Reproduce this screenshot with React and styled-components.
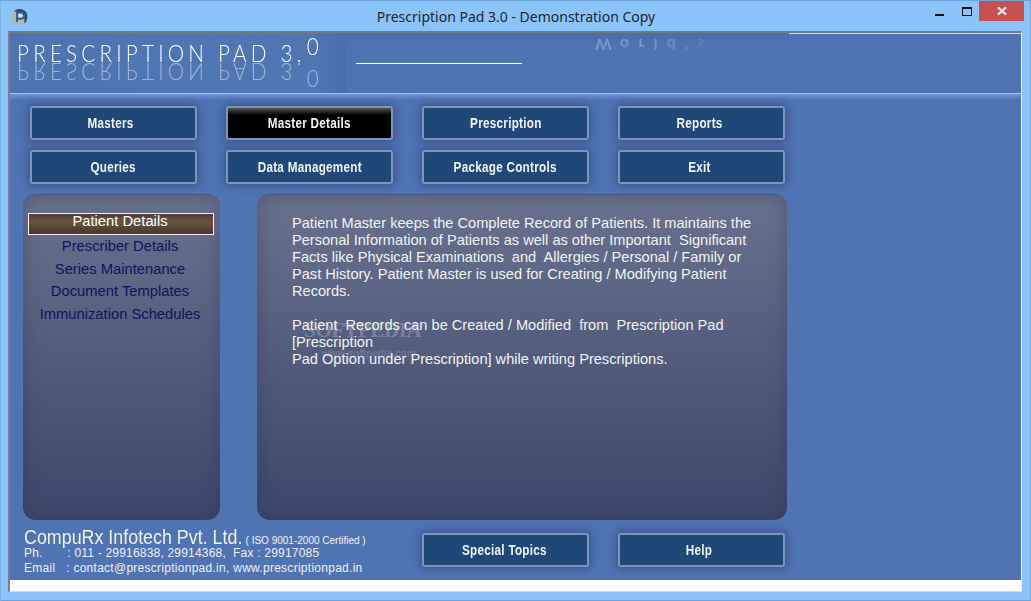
import React from "react";
import styled, { createGlobalStyle } from "styled-components";

const Global = createGlobalStyle`
  html, body { margin: 0; padding: 0; background: #8ac4fa; }
  #root { width: 1031px; height: 601px; overflow: hidden; }
`;

const Win = styled.div`
  width: 1031px; height: 601px; box-sizing: border-box; display: flex; flex-direction: column;
  background: #8ac4fa; border: 1px solid #6fa3d6; border-left-color: #7fb4e8; border-right-color: #6fa3d6;
`;
const TitleBar = styled.div`
  height: 30px; flex: none; position: relative; display: flex; align-items: center; justify-content: center;
`;
const AppIcon = styled.svg`
  position: absolute; left: 10px; top: 7px; width: 17px; height: 17px;
`;
const TitleText = styled.div`
  font: 14px "Noto Sans", "Open Sans", sans-serif; color: #23262b; padding-left: 1px;
`;
const Controls = styled.div`
  position: absolute; right: 6px; top: 0; display: flex; align-items: flex-start;
`;
const Min = styled.div`
  width: 9px; height: 2px; background: #111; margin-top: 13px; margin-right: 18px;
`;
const Max = styled.div`
  width: 8px; height: 6px; border: 1px solid #111; border-top-width: 2px; margin-top: 6px; margin-right: 7px;
`;
const Close = styled.div`
  width: 45px; height: 20px; background: #c75050; display: flex; align-items: center; justify-content: center;
`;
const Client = styled.div`
  margin: 0 8px 8px 7px; flex: 1; box-sizing: border-box; display: flex; flex-direction: column;
  border-top: 2px solid #76787f; border-left: 2px solid #7c7f86; border-right: 1px solid #f0f0f0; border-bottom: 1px solid #d8d8d8; background: #fff;
  min-height: 0;
`;
const Body = styled.div`
  height: 547px; flex: none; background: #5073b3; display: flex; flex-direction: column; position: relative;
`;
const Header = styled.div`
  height: 60px; flex: none; position: relative; display: flex; overflow: hidden;
  background: #5073b3;
  border-bottom: 1px solid #a7c2ea;
`;
const HeaderImage = styled.div`
  width: 779px; flex: none; height: 60px; display: flex; position: relative; background: linear-gradient(180deg, #4a6dab 0, #4f74b2 12px);
`;
const HeaderRest = styled.div`
  flex: 1; border-top: 1px solid #c8d4ea; box-sizing: border-box; height: 60px;
`;
const Brand = styled.div`
  position: relative; width: 330px; height: 60px; flex: none; margin-left: 7px; background: linear-gradient(90deg, #4f74b2 0, #5176b4 90%, #4a6dab 100%);
`;
const BrandLine = styled.div`
  position: absolute; left: 0; top: 8px; white-space: pre; color: #fff; transform-origin: left center;
  transform: scaleX(.86);
  font: 300 24px/24px Lato, sans-serif; letter-spacing: 4.9px;
`;
const Sup = styled.span`
  position: absolute; left: 337px; top: -7px; font-size: 24px; letter-spacing: 0;
`;
const BrandMirror = styled(BrandLine)`
  top: 27px; transform: scale(.86, -1); opacity: .45;
`;
const NameRule = styled.div`
  width: 166px; height: 1px; background: #fff; margin: 30px 0 0 9px; flex: none;
`;
const Worlds = styled.div`
  position: absolute; left: 585px; top: 3px; font: 700 16px/18px Lato, sans-serif; letter-spacing: 9.2px; white-space: pre;
  transform: scaleY(-1);
  background: linear-gradient(90deg, #7d95c4 0, #7d95c4 45%, #5a7cb8 100%); -webkit-background-clip: text; background-clip: text; color: transparent;
`;
const Band = styled.div`
  height: 6px; flex: none; background: linear-gradient(180deg, #6e98d6, #5073b3);
`;
const Grid = styled.div`
  display: grid; grid-template-columns: repeat(4, 167px); column-gap: 29px; row-gap: 10px; padding: 6px 0 0 20px;
`;
const Btn = styled.div`
  height: 34px; box-sizing: border-box; border: 2px solid #7d94bd; border-radius: 3px;
  background: ${p => p.$active ? "linear-gradient(180deg,#555 0,#000 7px)" : "#1f4878"};
  box-shadow: 0 0 9px 2px rgba(44,66,112,.6);
  color: #f2f5fa; display: flex; align-items: center; justify-content: center;
  padding-right: ${p => p.$r || 0}px; padding-bottom: 1px;
`;
const BtnLabel = styled.span`
  display: inline-block; white-space: pre; transform: scaleX(.78);
  font: 700 15px/16px "Liberation Sans", Arial, sans-serif; letter-spacing: .35px;
`;
const Panels = styled.div`
  display: flex; gap: 37px; padding: 10px 0 0 13px; height: 326px; flex: none;
`;
const Panel = styled.div`
  width: ${p => p.$w}px; height: 326px; box-sizing: border-box; border-radius: 13px; position: relative;
  background: linear-gradient(180deg, #68728f 0, #3b476b 100%);
  box-shadow: inset 0 0 18px rgba(58, 42, 70, .4);
  border-top: 1px solid #45587f;
`;
const MenuList = styled.div`
  display: flex; flex-direction: column; align-items: stretch; padding: 18px 6px 0 5px;
`;
const MenuItem = styled.div`
  height: ${p => p.$h}px; text-align: center; white-space: pre; font: 14.75px/16px "Liberation Sans", Arial, sans-serif; color: #12125e; padding-right: 2px;
`;
const MenuSel = styled.div`
  height: 22px; box-sizing: border-box; border: 1px solid #f4f0ea; margin-bottom: 3px; text-align: center;
  color: #fff; font: 14.75px/14px "Liberation Sans", Arial, sans-serif; padding-right: 2px;
  background: linear-gradient(180deg, #4e4034 0, #6b5340 40%, #43372f 100%);
`;
const Desc = styled.div`
  padding: 20px 0 0 35px; white-space: pre; color: #f3f3f3; font: 14.6px/17px "Liberation Sans", Arial, sans-serif;
`;
const Mark = styled.div`
  position: absolute; left: 47px; top: 123px; color: rgba(255,255,255,.24); font: 700 21px/24px "Liberation Serif", serif; letter-spacing: -.3px; pointer-events: none;
`;
const MarkUrl = styled.div`
  position: absolute; left: 65px; top: 153px; color: rgba(255,255,255,.18); font: 700 10px/12px "Liberation Sans", sans-serif; pointer-events: none;
`;
const Footer = styled.div`
  display: flex; padding: 5px 0 0 14px; position: relative;
`;
const Company = styled.div`
  width: 398px; flex: none; color: #edf1f4; font-family: "Liberation Sans", Arial, sans-serif;
`;
const CoName = styled.div`
  height: 21px; line-height: 24px; white-space: pre; color: #f0f3f0;
`;
const CoTitle = styled.span`
  display: inline-block; transform: scaleX(.893); transform-origin: left center; margin-right: -26px;
  font: 400 20px/24px "Liberation Sans", Arial, sans-serif;
`;
const Iso = styled.span`
  font: 10px/24px "Liberation Sans", Arial, sans-serif; margin-left: 3px;
`;
const CoLine = styled.div`
  font-size: 12px; line-height: 15px; letter-spacing: ${p => p.$ls}px; white-space: pre;
`;
const FootBtns = styled.div`
  display: flex; gap: 29px; padding-top: 8px;
`;
const FootBtn = styled(Btn)`
  width: 167px;
`;

const top = [
  ["Masters", false, 5], ["Master Details", true], ["Prescription"], ["Reports", false, 3],
  ["Queries", false, 1], ["Data Management"], ["Package Controls"], ["Exit", false, 5],
];

export default function App() {
  return (
    <Win>
      <Global />
      <TitleBar>
        <AppIcon viewBox="0 0 17 17">
          <circle cx="8.5" cy="8.5" r="8" fill="#b4b8a6" />
          <path d="M3 3.2A8 8 0 0 1 16.2 6.5V11a8 8 0 0 1-3 4.6C14 11 13 6 9 4.5 7 3.8 5 3.6 3 3.2Z" fill="#1c4a82" />
          <path d="M6 14V4.5h4.2a3 3 0 0 1 0 6.2H6" fill="none" stroke="#2a5fa0" strokeWidth="1.9" />
          <path d="M7.6 6h2.4a1.3 1.3 0 0 1 0 3H7.6Z" fill="#dfe8f2" />
        </AppIcon>
        <TitleText>Prescription Pad 3.0 - Demonstration Copy</TitleText>
        <Controls>
          <Min />
          <Max />
          <Close>
            <svg width="10" height="10" viewBox="0 0 10 10"><path d="M1 1.5l8 7M9 1.5l-8 7" stroke="#fff" strokeWidth="2" /></svg>
          </Close>
        </Controls>
      </TitleBar>
      <Client>
        <Body>
          <Header>
            <HeaderImage>
              <Brand>
                <BrandLine>PRESCRIPTION PAD 3.<Sup>0</Sup></BrandLine>
                <BrandMirror>PRESCRIPTION PAD 3.<Sup>0</Sup></BrandMirror>
              </Brand>
              <NameRule />
              <Worlds>World's</Worlds>
            </HeaderImage>
            <HeaderRest />
          </Header>
          <Band />
          <Grid>
            {top.map(([t, a, r]) => <Btn key={t} $active={a} $r={r}><BtnLabel>{t}</BtnLabel></Btn>)}
          </Grid>
          <Panels>
            <Panel $w={197}>
              <MenuList>
                <MenuSel>Patient Details</MenuSel>
                <MenuItem $h={23}>Prescriber Details</MenuItem>
                <MenuItem $h={22}>Series Maintenance</MenuItem>
                <MenuItem $h={23}>Document Templates</MenuItem>
                <MenuItem $h={22}>Immunization Schedules</MenuItem>
              </MenuList>
            </Panel>
            <Panel $w={530}>
              <Desc>{`Patient Master keeps the Complete Record of Patients. It maintains the
Personal Information of Patients as well as other Important  Significant
Facts like Physical Examinations  and  Allergies / Personal / Family or
Past History. Patient Master is used for Creating / Modifying Patient
Records.

Patient  Records can be Created / Modified  from  Prescription Pad
[Prescription
Pad Option under Prescription] while writing Prescriptions.`}</Desc>
              <Mark>SOFTPEDIA</Mark>
              <MarkUrl>www.softpedia.com</MarkUrl>
            </Panel>
          </Panels>
          <Footer>
            <Company>
              <CoName><CoTitle>CompuRx Infotech Pvt. Ltd.</CoTitle><Iso>( ISO 9001-2000 Certified )</Iso></CoName>
              <CoLine $ls={0.2}>{"Ph.       : 011 - 29916838, 29914368,  Fax : 29917085"}</CoLine>
              <CoLine $ls={0.27}>{"Email   : contact@prescriptionpad.in, www.prescriptionpad.in"}</CoLine>
            </Company>
            <FootBtns>
              <FootBtn $r={3}><BtnLabel>Special Topics</BtnLabel></FootBtn>
              <FootBtn $r={5}><BtnLabel>Help</BtnLabel></FootBtn>
            </FootBtns>
          </Footer>
        </Body>
      </Client>
    </Win>
  );
}
